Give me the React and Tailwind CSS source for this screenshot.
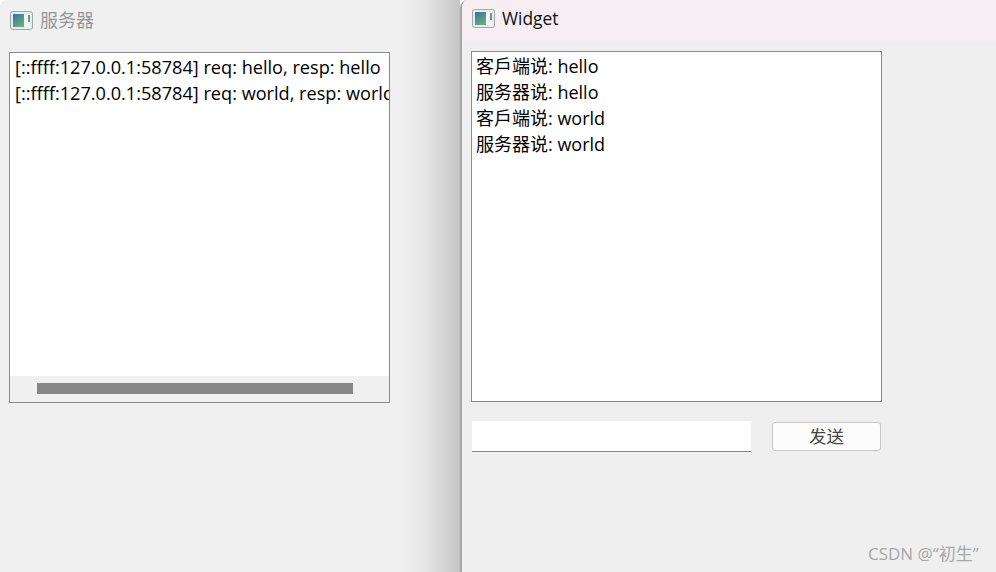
const textFont = "font-['Open_Sans','Noto_Sans_CJK_SC',sans-serif]"

function WindowIcon() {
    return (
        <svg width="23" height="19" viewBox="0 0 23 19" className="shrink-0">
            <defs>
                <linearGradient id="pane" x1="0" y1="0" x2="0.6" y2="1">
                    <stop offset="0" stopColor="#3f6f9f" />
                    <stop offset="1" stopColor="#5fb07f" />
                </linearGradient>
            </defs>
            <rect x="0.5" y="0.5" width="22" height="18" rx="2" fill="#e8ecec" stroke="#a3a8aa" />
            <rect x="3" y="3" width="11" height="13" fill="url(#pane)" />
            <rect x="14" y="3" width="6" height="13" fill="#f4f8f6" />
            <rect x="18" y="4" width="2" height="7" fill="#5f9f8a" />
        </svg>
    )
}

function ServerWindow() {
    return (
        <div className="w-[460px] shrink-0 h-full rounded-tl-[6px] bg-[linear-gradient(to_right,#f0f0f1_0px,#f0f0f1_400px,#e6e6e6_425px,#c4c4c4_460px)]">
            <div className="h-[40px] flex items-center pl-[10px] gap-[7px]">
                <WindowIcon />
                <span className="text-[18px] text-[#969696]">服务器</span>
            </div>
            <div className="ml-[9px] mt-[12px] w-[381px] h-[351px] border border-[#8a8a96] bg-white flex flex-col overflow-hidden">
                <div className="flex-1 pl-[5px] pt-[1px] text-[18.15px] leading-[26px] text-black whitespace-nowrap overflow-hidden">
                    <div>[::ffff:127.0.0.1:58784] req: hello, resp: hello</div>
                    <div>[::ffff:127.0.0.1:58784] req: world, resp: world</div>
                </div>
                <div className="h-[26px] bg-[#f0f0f0] pl-[27px] pt-[7px]">
                    <div className="w-[316px] h-[11px] bg-[#868686]"></div>
                </div>
            </div>
        </div>
    )
}

function ClientWindow() {
    const lines = ['客戶端说: hello', '服务器说: hello', '客戶端说: world', '服务器说: world']
    return (
        <div className="flex-1 h-full bg-[#efefef] border-l-2 border-[#a6a6a6] rounded-tl-lg overflow-hidden">
            <div className="h-[42px] bg-[#f7eef3] flex items-center pl-[10px] gap-[7px] pb-[6px]">
                <WindowIcon />
                <span className="text-[17.4px] text-[#111]">Widget</span>
            </div>
            <div className="ml-[9px] mt-[9px] w-[411px] h-[351px] border border-[#8a8a96] bg-white pl-[4px] pt-[1px] text-[18px] leading-[26px] text-black">
                {lines.map((line, i) => (
                    <div key={i}>{line}</div>
                ))}
            </div>
            <div className="flex items-start ml-[10px] mt-[19px]">
                <div className="w-[279px] h-[31px] bg-white border-b border-[#858585]"></div>
                <button className="ml-[21px] mt-[1px] w-[109px] h-[29px] bg-[#fcfcfc] border border-[#c8c8c8] rounded-[3px] text-[17.5px] leading-none text-[#444]">
                    发送
                </button>
            </div>
        </div>
    )
}

export default function App() {
    return (
        <div className={`relative w-[996px] h-[572px] flex overflow-hidden ${textFont}`}>
            <ServerWindow />
            <ClientWindow />
            <span className="absolute left-[868px] top-[543px] text-[17px] leading-[22px] text-[#a8a8a8]">
                CSDN @“初生”
            </span>
        </div>
    )
}
